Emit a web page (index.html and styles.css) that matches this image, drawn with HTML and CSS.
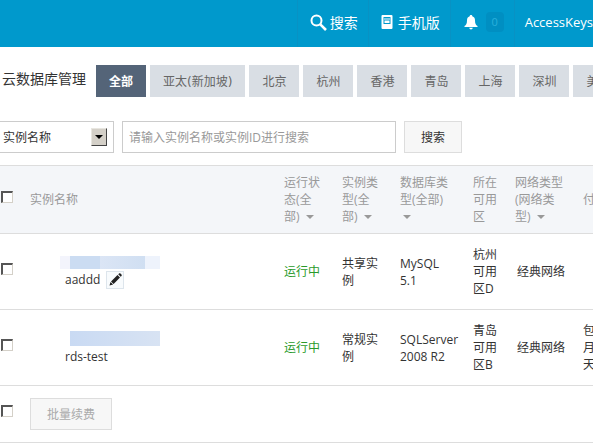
FILE: index.html
```html
<!DOCTYPE html>
<html lang="zh-CN">
<head>
    <meta charset="UTF-8">
    <meta name="viewport" content="width=device-width, initial-scale=1.0">
    <title>云数据库管理</title>
    <link rel="stylesheet" href="styles.css">
</head>
<body>

    <header>
        <nav class="topbar">
            <a class="topbar-item" href="#search">
                <svg class="icon-search" width="17" height="17" viewBox="0 0 17 17" fill="none" stroke="#fff">
                    <circle cx="6.5" cy="6.5" r="5" stroke-width="2"/>
                    <path d="M10.3 10.3L16 16" stroke-width="2.6"/>
                </svg>
                <span>搜索</span>
            </a>
            <a class="topbar-item" href="#mobile">
                <svg class="icon-phone" width="12" height="14" viewBox="0 0 12 14">
                    <path fill="#fff" fill-rule="evenodd" d="M1.500 0h9a1 1 0 0 1 1 1v12a1 1 0 0 1-1 1h-9a1 1 0 0 1-1-1V1a1 1 0 0 1 1-1zM2.500 2v7h7V2z"/>
                    <path fill="#fff" d="M3 3.500h6v1H3zM3.500 5.500h5v2.500h-5z"/>
                </svg>
                <span>手机版</span>
            </a>
            <a class="topbar-item" href="#message">
                <svg class="icon-bell" width="14" height="15" viewBox="0 0 14 15">
                    <path fill="#fff" d="M7 0c.8 0 1.300.5 1.300 1.200C10.300 1.800 11 3.500 11 5.500c0 3 .8 4.500 2.500 5.500v1H.5v-1C2.200 10 3 8.500 3 5.500c0-2 .7-3.700 2.700-4.300C5.700.5 6.200 0 7 0zM5.200 12.800h3.600c-.2 1-1 1.700-1.800 1.700s-1.600-.7-1.800-1.700z"/>
                </svg>
                <span class="badge">0</span>
            </a>
            <a class="topbar-item topbar-last" href="#accesskeys">AccessKeys</a>
        </nav>
    </header>

    <main>
        <div class="region-bar">
            <h1>云数据库管理</h1>
            <div class="regions">
                <button class="region active">全部</button>
                <button class="region">亚太(新加坡)</button>
                <button class="region">北京</button>
                <button class="region">杭州</button>
                <button class="region">香港</button>
                <button class="region">青岛</button>
                <button class="region">上海</button>
                <button class="region">深圳</button>
                <button class="region">美国</button>
            </div>
        </div>

        <form class="search-form">
            <div class="select-box">
                <select aria-label="搜索条件">
                    <option>实例名称</option>
                </select>
                <span class="select-arrow"></span>
            </div>
            <input class="keyword" type="text" aria-label="关键字" placeholder="请输入实例名称或实例ID进行搜索">
            <button class="btn" type="button">搜索</button>
        </form>

        <table class="instances">
            <colgroup>
                <col class="col-check">
                <col class="col-name">
                <col class="col-status">
                <col class="col-type">
                <col class="col-db">
                <col class="col-zone">
                <col class="col-network">
                <col class="col-pay">
            </colgroup>
            <thead>
                <tr>
                    <th class="check"><input type="checkbox" aria-label="全选"></th>
                    <th>实例名称</th>
                    <th>运行状态(全部) <i class="caret"></i></th>
                    <th>实例类型(全部) <i class="caret"></i></th>
                    <th>数据库类型(全部) <i class="caret"></i></th>
                    <th>所在可用区</th>
                    <th>网络类型(网络类型) <i class="caret"></i></th>
                    <th>付</th>
                </tr>
            </thead>
            <tbody>
                <tr>
                    <td class="check"><input type="checkbox" aria-label="aaddd"></td>
                    <td class="name">
                        <div class="masked masked-light"></div>
                        <div class="alias">
                            <span>aaddd</span>
                            <button class="edit" aria-label="编辑">
                                <svg width="13" height="13" viewBox="0 0 13 13" fill="#222">
                                    <path d="M.5 12.500l1-3.600 2.600 2.600zM2 8.400L8.500 2l2.500 2.500-6.400 6.500zM9.200 1.300l.9-.8c.4-.4.9-.4 1.300 0l1.100 1.100c.4.4.4.9 0 1.300l-.8.900z"/>
                                </svg>
                            </button>
                        </div>
                    </td>
                    <td class="running">运行中</td>
                    <td>共享实例</td>
                    <td>MySQL 5.1</td>
                    <td>杭州可用区D</td>
                    <td class="network">经典网络</td>
                    <td></td>
                </tr>
                <tr>
                    <td class="check"><input type="checkbox" aria-label="rds-test"></td>
                    <td class="name">
                        <div class="masked"></div>
                        <div class="alias"><span>rds-test</span></div>
                    </td>
                    <td class="running">运行中</td>
                    <td>常规实例</td>
                    <td>SQLServer 2008 R2</td>
                    <td>青岛可用区B</td>
                    <td class="network">经典网络</td>
                    <td>包月天</td>
                </tr>
            </tbody>
            <tfoot>
                <tr>
                    <td class="check"><input type="checkbox" aria-label="全选"></td>
                    <td colspan="7"><button class="btn" disabled>批量续费</button></td>
                </tr>
            </tfoot>
        </table>
    </main>

</body>
</html>
```
FILE: styles.css
```css
* {
    box-sizing: border-box;
}
body {
    margin: 0;
    font-family: "Open Sans", "Noto Sans CJK SC", sans-serif;
    font-size: 12px;
    line-height: 17px;
    color: #333;
    background-color: #fff;
    overflow: hidden;
}
button, input, select {
    font: inherit;
    color: inherit;
    margin: 0;
    border-radius: 0;
}
.topbar {
    display: flex;
    justify-content: flex-end;
    height: 47px;
    background-color: #0099cc;
}
.topbar-item {
    display: flex;
    align-items: center;
    padding: 0 10px 3px 12px;
    border-left: 1px solid #0892c4;
    color: #fff;
    font-size: 14px;
    text-decoration: none;
    white-space: nowrap;
}
.topbar-last {
    padding-left: 10px;
    padding-right: 0;
    font-size: 13px;
}
.icon-search {
    margin-right: 3px;
}
.icon-phone {
    margin-right: 5px;
}
.icon-bell {
    margin-left: 1px;
    margin-right: 8px;
}
.badge {
    width: 18px;
    height: 20px;
    border-radius: 4px;
    background-color: #008fc2;
    color: #2bb0dc;
    font-size: 11px;
    line-height: 20px;
    text-align: center;
}
.region-bar {
    display: flex;
    padding: 18px 0 0 2px;
}
h1 {
    flex: none;
    margin: 0 10px 0 0;
    font-size: 14px;
    font-weight: normal;
    line-height: 28px;
}
.regions {
    display: flex;
    gap: 4px;
}
.region {
    flex: none;
    height: 32px;
    padding: 2px 13px 0;
    border: 0;
    background-color: #d9dee4;
    color: #666;
    font-family: "DejaVu Sans", "Noto Sans CJK SC", sans-serif;
    cursor: pointer;
}
.region.active {
    background-color: #546478;
    color: #fff;
    font-weight: bold;
}
.search-form {
    display: flex;
    gap: 8px;
    padding: 24px 131px 12px 0;
}
.select-box {
    position: relative;
    flex: none;
    width: 114px;
}
.select-box select {
    appearance: none;
    width: 100%;
    height: 32px;
    padding: 0 24px 0 3px;
    border: 1px solid #ccc;
    border-left: 0;
    background-color: #fff;
}
.select-arrow {
    position: absolute;
    top: 7px;
    right: 7px;
    width: 16px;
    height: 18px;
    border: 1px solid;
    border-color: #e8e6e0 #444 #444 #e8e6e0;
    background-color: #d4d0c8;
    pointer-events: none;
}
.select-arrow::after {
    content: "";
    display: block;
    margin: 6px 3px;
    border: 4px solid transparent;
    border-top-color: #000;
    border-bottom: 0;
}
.keyword {
    flex: 1;
    min-width: 0;
    height: 32px;
    padding: 0 6px;
    border: 1px solid #ccc;
}
.keyword::placeholder {
    color: #999;
}
.btn {
    flex: none;
    height: 32px;
    padding: 0 16px;
    border: 1px solid #ddd;
    background-color: #f7f7f7;
    cursor: pointer;
}
.btn:disabled {
    color: #aaa;
    cursor: default;
}
.instances {
    width: 100%;
    table-layout: fixed;
    border-collapse: collapse;
    border-top: 1px solid #ddd;
}
.col-check {
    width: 22px;
}
.col-status, .col-type {
    width: 58px;
}
.col-db {
    width: 73px;
}
.col-zone {
    width: 42px;
}
.col-network {
    width: 68px;
}
.col-pay {
    width: 18px;
}
.instances th, .instances td {
    padding: 12px 8px;
    border-bottom: 1px solid #ddd;
    font-weight: normal;
    text-align: left;
    vertical-align: middle;
}
.instances th {
    padding-top: 8px;
    padding-bottom: 8px;
    background-color: #f4f6f9;
    color: #999;
}
.instances .check {
    padding: 8px 0 14px 1px;
}
.check input {
    appearance: none;
    display: block;
    width: 12px;
    height: 12px;
    border: 1px solid #d4d0c8;
    border-top: 2px solid #555;
    border-left: 2px solid #555;
    background-color: #fff;
}
.caret {
    display: inline-block;
    margin: 0 1px 2px 3px;
    border: 4px solid transparent;
    border-top-color: #999;
    border-bottom: 0;
}
.instances .name {
    padding: 13px 8px 10px 43px;
}
.masked {
    width: 90px;
    height: 15px;
    margin-left: 5px;
    background: linear-gradient(90deg, #c9daf3, #d8e3f3);
}
.masked-light {
    width: 100px;
    height: 13px;
    margin-left: -5px;
    background: linear-gradient(90deg, #f3f4fc 10px, #cbdcf2 10px, #cbdcf2 40px, #dbe5f5 40px, #d0dff2 85px, #eef3fc 85px);
}
.alias {
    display: flex;
    align-items: center;
    gap: 6px;
    min-height: 22px;
}
.edit {
    display: flex;
    align-items: center;
    justify-content: center;
    width: 18px;
    height: 18px;
    padding: 0;
    border: 1px solid #dde5ec;
    background-color: #f8fbfd;
    cursor: pointer;
}
.instances .running {
    color: #2a9a2a;
}
.instances .network {
    padding-left: 10px;
}
```
